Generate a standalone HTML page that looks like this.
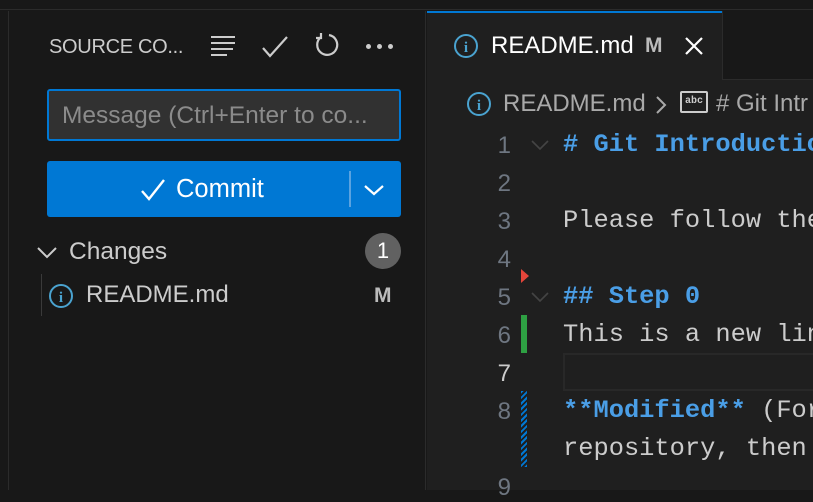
<!DOCTYPE html>
<html><head><meta charset="utf-8"><style>
*{margin:0;padding:0;box-sizing:border-box}
body{width:813px;height:490px;overflow:hidden;background:#181818;position:relative;font-family:"Liberation Sans",sans-serif;color:#ccc}
.a{position:absolute}
.mono{font-family:"Liberation Mono",monospace;font-size:25.4px;white-space:pre}
.ln{position:absolute;width:84px;text-align:right;left:427px;color:#6e7681;font-size:24px}
.cl{position:absolute;left:563px;color:#ccc}
.b{color:#4a9ee6;font-weight:bold}
</style></head><body>
<div class="a" style="left:0;top:0;width:813px;height:10px;background:#181818;border-bottom:1px solid #2b2b2b"></div>
<div class="a" style="left:8px;top:11px;width:1px;height:479px;background:#2b2b2b"></div>
<div class="a" style="left:425px;top:11px;width:1px;height:479px;background:#2b2b2b"></div>
<div class="a" style="left:49px;top:36px;font-size:20px;color:#ccc;letter-spacing:-0.3px">SOURCE CO...</div>
<svg class="a" style="left:208px;top:33px" width="30" height="26" viewBox="0 0 30 26" stroke="#ccc" stroke-width="2" fill="none"><path d="M3 4H27M3 10H27M3 16H25M3 22H19"/></svg>
<svg class="a" style="left:260px;top:32px" width="30" height="28" viewBox="0 0 30 28" stroke="#ccc" stroke-width="2.2" fill="none"><path d="M3 16L10 24L27 5"/></svg>
<svg class="a" style="left:312px;top:31px" width="30" height="30" viewBox="0 0 30 30" stroke="#ccc" stroke-width="2.2" fill="none"><path d="M9 6A10 10 0 1 0 17 4"/><path d="M9 2V7H4"/></svg>
<div class="a" style="left:366px;top:44px;width:28px;height:6px">
<span class="a" style="left:0;top:0;width:5px;height:5px;background:#ccc;border-radius:3px"></span><span class="a" style="left:11px;top:0;width:5px;height:5px;background:#ccc;border-radius:3px"></span><span class="a" style="left:22px;top:0;width:5px;height:5px;background:#ccc;border-radius:3px"></span></div>
<div class="a" style="left:47px;top:89px;width:354px;height:52px;background:#313131;border:2px solid #0078d4;border-radius:3px"></div>
<div class="a" style="left:62px;top:102px;font-size:24.5px;color:#8b8b8b;white-space:nowrap">Message (Ctrl+Enter to co...</div>
<div class="a" style="left:47px;top:161px;width:354px;height:56px;background:#0078d4;border-radius:3px"></div>
<svg class="a" style="left:140px;top:177px" width="28" height="26" viewBox="0 0 28 26" stroke="#fff" stroke-width="2.4" fill="none"><path d="M2 14L9 22L24 3"/></svg>
<div class="a" style="left:176px;top:175px;font-size:25.5px;color:#fff">Commit</div>
<div class="a" style="left:349px;top:171px;width:2px;height:36px;background:#5aa3e0"></div>
<svg class="a" style="left:362px;top:182px" width="24" height="16" viewBox="0 0 24 16" stroke="#fff" stroke-width="2.2" fill="none"><path d="M3 4L12 12L21 4"/></svg>
<svg class="a" style="left:36px;top:245px" width="22" height="16" viewBox="0 0 22 16" stroke="#ccc" stroke-width="2" fill="none"><path d="M2 3L11 12L20 3"/></svg>
<div class="a" style="left:69px;top:238px;font-size:24.5px;color:#ccc">Changes</div>
<div class="a" style="left:365px;top:233px;width:36px;height:36px;border-radius:18px;background:#616161;color:#fff;font-size:22px;text-align:center;line-height:36px">1</div>
<div class="a" style="left:41px;top:274px;width:1px;height:42px;background:#3a3a3a"></div>
<svg class="a" style="left:48px;top:283px" width="26" height="26" viewBox="0 0 26 26"><circle cx="13" cy="13" r="11" stroke="#4aa3d0" stroke-width="2" fill="none"/><text x="13" y="19" font-size="15" font-weight="bold" fill="#4aa3d0" text-anchor="middle" font-family="Liberation Serif">i</text></svg>
<div class="a" style="left:86px;top:281px;font-size:24px;color:#ccc">README.md</div>
<div class="a" style="left:374px;top:284px;font-size:21px;font-weight:bold;color:#bbb">M</div>
<div class="a" style="left:427px;top:11px;width:386px;height:479px;background:#1f1f1f"></div>
<div class="a" style="left:722px;top:11px;width:91px;height:69px;background:#181818;border-left:1px solid #2b2b2b;border-bottom:1px solid #2b2b2b"></div>
<div class="a" style="left:427px;top:11px;width:295px;height:2px;background:#0078d4"></div>
<svg class="a" style="left:453px;top:33px" width="26" height="26" viewBox="0 0 26 26"><circle cx="13" cy="13" r="11" stroke="#4aa3d0" stroke-width="2" fill="none"/><text x="13" y="19" font-size="15" font-weight="bold" fill="#4aa3d0" text-anchor="middle" font-family="Liberation Serif">i</text></svg>
<div class="a" style="left:491px;top:32px;font-size:24px;color:#fff">README.md</div>
<div class="a" style="left:645px;top:34px;font-size:21px;font-weight:bold;color:#bbb">M</div>
<svg class="a" style="left:683px;top:35px" width="22" height="22" viewBox="0 0 22 22" stroke="#fff" stroke-width="2.2"><path d="M3 3L19 19M19 3L3 19"/></svg>
<svg class="a" style="left:466px;top:91px" width="26" height="26" viewBox="0 0 26 26"><circle cx="13" cy="13" r="11" stroke="#4aa3d0" stroke-width="2" fill="none"/><text x="13" y="19" font-size="15" font-weight="bold" fill="#4aa3d0" text-anchor="middle" font-family="Liberation Serif">i</text></svg>
<div class="a" style="left:503px;top:90px;font-size:24px;color:#a9a9a9">README.md</div>
<svg class="a" style="left:654px;top:94px" width="14" height="22" viewBox="0 0 14 22" stroke="#a9a9a9" stroke-width="2" fill="none"><path d="M3 3L11 11L3 19"/></svg>
<div class="a" style="left:680px;top:91px;width:28px;height:22px;border:2px solid #ccc;border-radius:2px;font-size:10px;font-weight:bold;color:#ccc;text-align:center;line-height:17px;font-family:'Liberation Mono',monospace">abc</div>
<div class="a" style="left:716px;top:90px;font-size:24px;color:#a9a9a9;white-space:nowrap">#&nbsp;Git Intr</div>
<div class="ln" style="top:132px">1</div>
<div class="ln" style="top:170px">2</div>
<div class="ln" style="top:208px">3</div>
<div class="ln" style="top:246px">4</div>
<div class="ln" style="top:284px">5</div>
<div class="ln" style="top:322px">6</div>
<div class="ln" style="top:360px;color:#ccc">7</div>
<div class="ln" style="top:398px">8</div>
<div class="ln" style="top:474px">9</div>
<svg class="a" style="left:530px;top:138px" width="20" height="14" viewBox="0 0 20 14" stroke="#444" stroke-width="1.6" fill="none"><path d="M2 3L10 11L18 3"/></svg>
<svg class="a" style="left:530px;top:290px" width="20" height="14" viewBox="0 0 20 14" stroke="#444" stroke-width="1.6" fill="none"><path d="M2 3L10 11L18 3"/></svg>
<svg class="a" style="left:521px;top:269px" width="10" height="16" viewBox="0 0 10 16"><path d="M0 0L8 7L0 14Z" fill="#e5453a"/></svg>
<div class="a" style="left:521px;top:315px;width:6px;height:38px;background:#2ea043"></div>
<div class="a" style="left:521px;top:391px;width:6px;height:76px;background:repeating-linear-gradient(-45deg,#0078d4 0 2px,transparent 2px 4px)"></div>
<div class="a" style="left:563px;top:353px;width:250px;height:38px;border:2px solid #282828;border-right:none"></div>
<div class="mono cl b" style="top:130px"># Git Introduction</div>
<div class="mono cl" style="top:206px">Please follow the</div>
<div class="mono cl b" style="top:282px">## Step 0</div>
<div class="mono cl" style="top:320px">This is a new line</div>
<div class="mono cl" style="top:396px"><span class="b">**Modified**</span> (For</div>
<div class="mono cl" style="top:434px">repository, then</div>
</body></html>
